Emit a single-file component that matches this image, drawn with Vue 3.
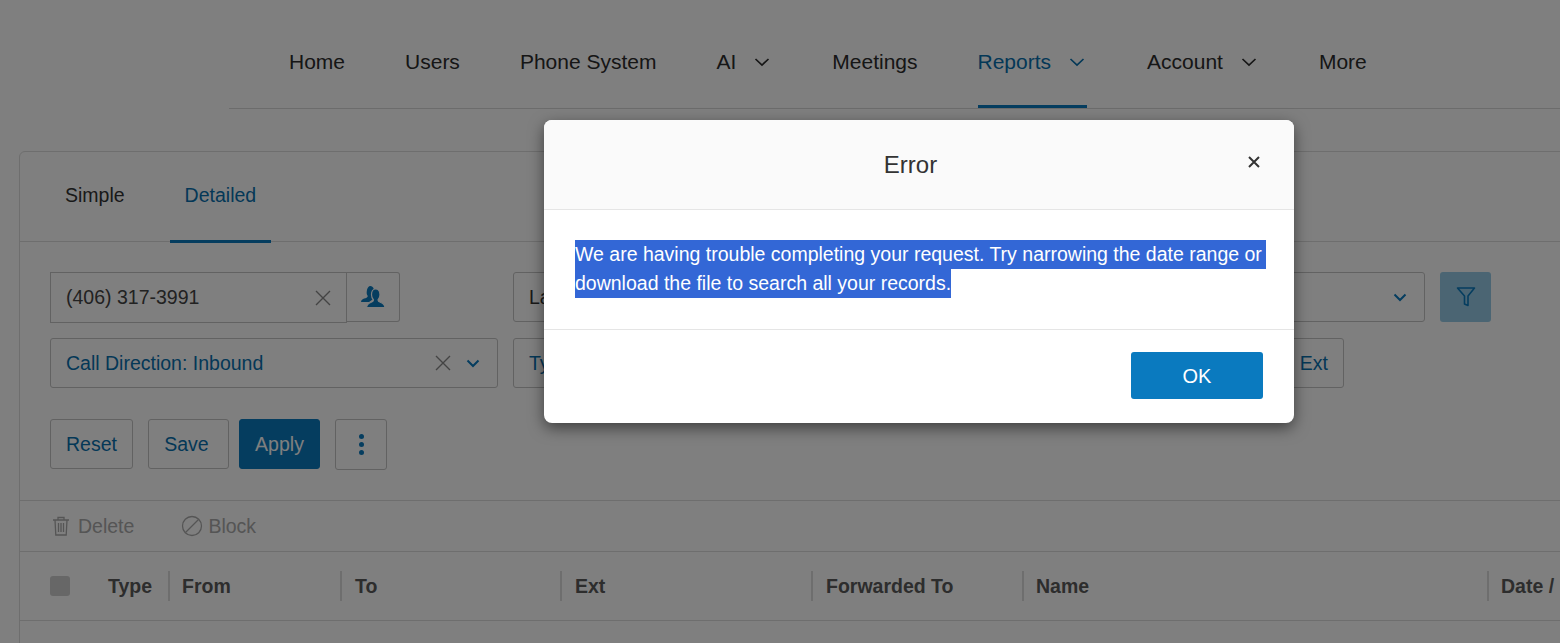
<script setup>
const nav = [
  { label: 'Home' },
  { label: 'Users' },
  { label: 'Phone System' },
  { label: 'AI', chevron: true },
  { label: 'Meetings' },
  { label: 'Reports', chevron: true, active: true },
  { label: 'Account', chevron: true },
  { label: 'More' },
]
const columns = [
  { label: 'Type', width: 120, pad: 58 },
  { label: 'From', width: 172, pad: 12 },
  { label: 'To', width: 220, pad: 13 },
  { label: 'Ext', width: 251, pad: 13 },
  { label: 'Forwarded To', width: 211, pad: 13 },
  { label: 'Name', width: 465, pad: 12 },
  { label: 'Date /', width: 72, pad: 12 },
]
</script>

<template>
  <div class="page">
    <header class="header">
      <nav class="nav">
        <a v-for="n in nav" :key="n.label" class="nav-item" :class="{ active: n.active }">
          <span>{{ n.label }}</span>
          <svg v-if="n.chevron" class="nav-chev" width="18" height="10" viewBox="0 0 18 10"><path d="M1.500 2l6.500 6 6.500-6" fill="none" stroke="currentColor" stroke-width="1.700" /></svg>
        </a>
      </nav>
    </header>

    <section class="panel">
      <div class="tabs">
        <a class="tab">Simple</a>
        <a class="tab selected">Detailed</a>
      </div>

      <div class="filters">
        <div class="row one">
          <div class="search">
            <span class="value">(406) 317-3991</span>
            <svg class="x" width="16" height="16" viewBox="0 0 16 16"><path d="M1 1l14 14M15 1L1 15" stroke="currentColor" stroke-width="1.400" fill="none" /></svg>
          </div>
          <button class="contacts">
            <svg width="24" height="22" viewBox="0 0 24 22">
              <path fill="currentColor" d="M9.500 0C11.800 0 13 2.300 13 5c0 2-.8 4-2 5 0 1.500 1 2 2 2.500L8 16H0c.3-2 1.600-2.800 3.200-3.400C5 12 6.500 11.500 6.800 10 5.700 9 5.500 7 5.800 5 6.100 2 7.500 0 9.500 0z" />
              <path fill="currentColor" stroke="#fff" stroke-width="1.200" d="M14.500 3c2.700 0 4.500 2.500 4.500 5.800 0 2.200-.8 4-2 5.200 0 1.300 1 1.800 2.800 2.500 2 .7 3.700 1.700 4.200 5H5.500c.5-3.300 2.200-4.300 4.200-5 1.800-.7 2.800-1.200 2.800-2.500-1.200-1.200-2-3-2-5.200C10.500 5.500 12 3 14.500 3z" />
            </svg>
          </button>
          <div class="select wide">
            <span class="ink">La</span>
            <svg class="chev" width="14" height="9" viewBox="0 0 14 9"><path d="M1.500 1.500L7 7l5.500-5.500" fill="none" stroke="currentColor" stroke-width="2" /></svg>
          </div>
          <button class="funnel">
            <svg width="20" height="22" viewBox="0 0 20 22"><path d="M1.500 2h17L12 10v9.500L8.500 18V10z" fill="none" stroke="currentColor" stroke-width="1.600" stroke-linejoin="round" /></svg>
          </button>
        </div>

        <div class="row two">
          <div class="select direction">
            <span class="link">Call Direction: Inbound</span>
            <svg class="x" width="16" height="16" viewBox="0 0 16 16"><path d="M1 1l14 14M15 1L1 15" stroke="currentColor" stroke-width="1.400" fill="none" /></svg>
            <svg class="chev" width="14" height="9" viewBox="0 0 14 9"><path d="M1.500 1.500L7 7l5.500-5.500" fill="none" stroke="currentColor" stroke-width="2" /></svg>
          </div>
          <div class="select type">
            <span class="link">Ty</span>
            <span class="link ext">Ext</span>
          </div>
        </div>

        <div class="row actions">
          <button class="btn reset">Reset</button>
          <button class="btn save">Save</button>
          <button class="btn apply">Apply</button>
          <button class="btn dots"><i></i><i></i><i></i></button>
        </div>
      </div>

      <div class="toolbar">
        <span class="tool first">
          <svg width="20" height="22" viewBox="0 0 20 22"><path d="M2 5h16M7 5V2.500h6V5M4 5l.8 15h10.400L16 5M7.500 8v9M10 8v9M12.500 8v9" fill="none" stroke="currentColor" stroke-width="1.300" /></svg>
          Delete
        </span>
        <span class="tool second">
          <svg width="22" height="22" viewBox="0 0 22 22"><circle cx="11" cy="11" r="9.500" fill="none" stroke="currentColor" stroke-width="1.300" /><path d="M4.500 17.500l13-13" stroke="currentColor" stroke-width="1.300" /></svg>
          Block
        </span>
      </div>

      <div class="thead">
        <span class="check"></span>
        <div
          v-for="c in columns"
          :key="c.label"
          class="th"
          :style="{ width: c.width + 'px', paddingLeft: c.pad + 'px' }"
        >{{ c.label }}</div>
      </div>
    </section>

    <div class="overlay">
      <div class="modal">
        <div class="m-head">
          <h2>Error</h2>
          <svg class="close" width="14" height="14" viewBox="0 0 14 14"><path d="M2 2l10 10M12 2L2 12" stroke="currentColor" stroke-width="2" fill="none" /></svg>
        </div>
        <div class="m-body">
          <div class="sel first-line">We are having trouble completing your request. Try narrowing the date range or</div>
          <div class="sel">download the file to search all your records.</div>
        </div>
        <div class="m-foot">
          <button class="ok">OK</button>
        </div>
      </div>
    </div>
  </div>
</template>

<style>
html, body { margin: 0; height: 643px; overflow: hidden; background: #fff; }
</style>

<style scoped>
.page { position: relative; width: 1560px; height: 643px; overflow: hidden; background: #fff; font-family: "Liberation Sans", Arial, sans-serif; font-size: 19.500px; color: #333; }
.header { margin-left: 229px; height: 108px; border-bottom: 1px solid #d9d9d9; }
.nav { display: flex; padding-left: 30px; height: 108px; font-size: 21px; }
.nav-item { display: flex; align-items: flex-start; gap: 18px; padding: 49px 30px 0; height: 108px; box-sizing: border-box; line-height: 26px; white-space: nowrap; color: #2c2c2c; border-bottom: 3px solid transparent; }
.nav-chev { margin-top: 8px; }
.nav-item.active { color: #0870ae; border-bottom-color: #0a7abf; padding: 49px 0 0; margin: 0 30px; }

.panel { margin: 42px 0 0 19px; width: 1600px; height: 560px; border: 1px solid #dcdcdc; box-sizing: border-box; border-radius: 6px 0 0 0; }
.tabs { display: flex; height: 89px; border-bottom: 1px solid #dcdcdc; padding-left: 15px; }
.tab { padding: 30px 30px 0; line-height: 26px; height: 89px; box-sizing: border-box; color: #333; }
.tab.selected { color: #0870ae; border-bottom: 3px solid #0a7abf; height: 91px; padding: 30px 15px 0; margin-left: 15px; width: 101px; }

.filters { padding: 30px 30px 0; height: 259px; box-sizing: border-box; border-bottom: 1px solid #dcdcdc; }
.row { display: flex; }
.one { height: 51px; }
.two { margin-top: 15px; height: 50px; gap: 15px; }
.actions { margin-top: 31px; height: 51px; align-items: flex-start; }
.search { width: 297px; height: 51px; box-sizing: border-box; border: 1px solid #c4c4c4; padding: 0 15px; display: flex; align-items: center; justify-content: space-between; }
.value { color: #444; }
.x { color: #888; flex: none; }
.contacts { width: 53px; height: 50px; box-sizing: border-box; border: 1px solid #c4c4c4; border-left: 0; border-radius: 0 3px 3px 0; background: #fff; color: #0a7abf; padding: 0; display: flex; align-items: center; justify-content: center; margin-right: 113px; }
.select { box-sizing: border-box; border: 1px solid #c4c4c4; border-radius: 3px; display: flex; align-items: center; padding: 0 15px; }
.wide { width: 912px; height: 50px; justify-content: space-between; }
.wide .chev { margin-right: 2px; }
.ink { color: #333; }
.chev { color: #0a7abf; flex: none; }
.funnel { margin-left: 15px; width: 51px; height: 50px; border: 0; border-radius: 3px; background: #96cbe6; color: #0a7abf; padding: 0; display: flex; align-items: center; justify-content: center; }
.direction { width: 448px; height: 50px; padding-right: 17px; }
.direction .link { flex: 1; }
.direction .chev { margin-left: 15px; }
.link { color: #0870ae; }
.type { width: 831px; height: 50px; justify-content: space-between; }
.btn { height: 50px; box-sizing: border-box; border: 1px solid #c4c4c4; border-radius: 3px; background: #fff; color: #0870ae; font: inherit; padding: 0; }
.reset { width: 83px; margin-right: 15px; }
.save { width: 81px; margin-right: 10px; padding-right: 4px; }
.apply { width: 81px; margin-right: 15px; background: #0a7abf; border-color: #0a7abf; color: #fff; }
.dots { width: 52px; height: 51px; display: flex; flex-direction: column; align-items: center; justify-content: center; gap: 3px; }
.dots i { display: block; width: 5px; height: 5px; border-radius: 50%; background: #0a7abf; }

.toolbar { display: flex; align-items: center; height: 50px; border-bottom: 1px solid #dcdcdc; padding-left: 31px; color: #aaa; }
.tool { display: flex; align-items: center; gap: 7px; }
.tool.first { margin-right: 47px; }
.tool.second { gap: 5px; }
.thead { display: flex; align-items: center; height: 68px; border-bottom: 1px solid #dcdcdc; padding-left: 30px; }
.check { width: 20px; height: 20px; border-radius: 3px; background: #cfcfcf; flex: none; margin-right: -20px; }
.th { box-sizing: border-box; height: 30px; line-height: 30px; font-weight: 700; color: #5a5a5a; border-right: 2px solid #ddd; white-space: nowrap; flex: none; }
.th:last-child { border-right: 0; }

.overlay { position: absolute; inset: 0; background: rgba(0, 0, 0, 0.5); }
.modal { position: absolute; left: 544px; top: 120px; width: 750px; height: 303px; background: #fff; border-radius: 8px; box-shadow: 0 5px 15px rgba(0, 0, 0, 0.5); overflow: hidden; }
.m-head { position: relative; height: 89px; background: #fafafa; border-bottom: 1px solid #e5e5e5; display: flex; align-items: center; justify-content: center; padding-right: 17px; }
.m-head h2 { margin: 0; font-size: 24px; font-weight: 400; color: #333; line-height: 90px; }
.close { position: absolute; right: 33px; top: 35px; color: #333; }
.m-body { height: 120px; box-sizing: border-box; border-bottom: 1px solid #e5e5e5; padding: 30px 31px 0; }
.sel { width: fit-content; height: 29px; line-height: 29px; background: #3367d6; color: #fff; white-space: nowrap; }
.first-line { padding-right: 4px; }
.m-foot { display: flex; justify-content: flex-end; padding: 22px 31px 0; }
.ok { width: 132px; height: 47px; border: 0; border-radius: 3px; background: #0a7abf; color: #fff; font: inherit; font-size: 20px; padding: 1px 0 0; }
</style>
